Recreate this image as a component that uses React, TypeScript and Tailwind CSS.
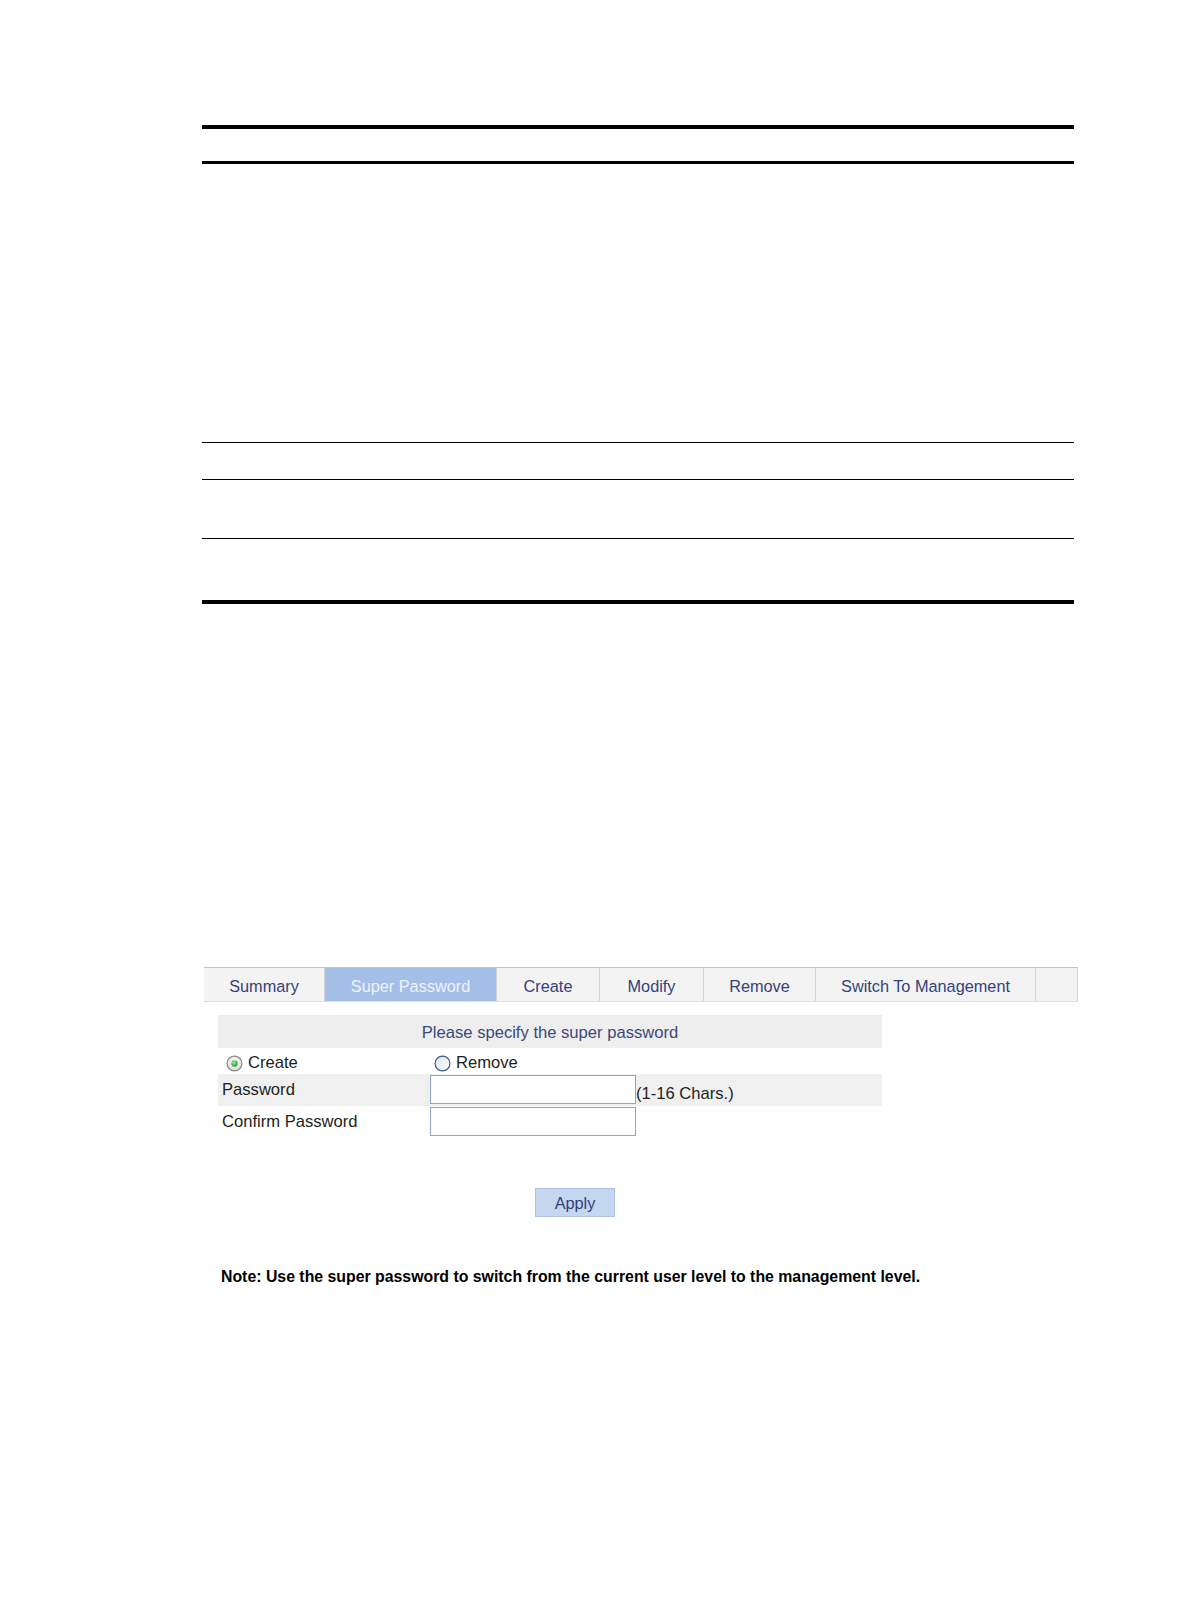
import React from "react";

function RadioOn() {
  return (
    <svg width="17" height="17" viewBox="0 0 16 16" className="shrink-0">
      <defs>
        <radialGradient id="rg1" cx="50%" cy="40%" r="60%">
          <stop offset="0%" stopColor="#ffffff" />
          <stop offset="100%" stopColor="#dcdcdc" />
        </radialGradient>
        <radialGradient id="rg2" cx="40%" cy="35%" r="70%">
          <stop offset="0%" stopColor="#9be89b" />
          <stop offset="100%" stopColor="#1f9a2a" />
        </radialGradient>
      </defs>
      <circle cx="8" cy="8" r="7" fill="url(#rg1)" stroke="#8a8a8a" strokeWidth="1.1" />
      <circle cx="8" cy="8" r="3" fill="url(#rg2)" />
    </svg>
  );
}

function RadioOff() {
  return (
    <svg width="17" height="17" viewBox="0 0 16 16" className="shrink-0">
      <defs>
        <linearGradient id="lg1" x1="0" y1="0" x2="1" y2="1">
          <stop offset="0%" stopColor="#dfe3ea" />
          <stop offset="100%" stopColor="#ffffff" />
        </linearGradient>
      </defs>
      <circle cx="8" cy="8" r="7" fill="url(#lg1)" stroke="#3f5d8c" strokeWidth="1.1" />
    </svg>
  );
}

const tabs = [
  { label: "Summary", w: "w-[121px]", active: false },
  { label: "Super Password", w: "w-[172px]", active: true },
  { label: "Create", w: "w-[103px]", active: false },
  { label: "Modify", w: "w-[104px]", active: false },
  { label: "Remove", w: "w-[112px]", active: false },
  { label: "Switch To Management", w: "w-[220px]", active: false },
  { label: "", w: "w-[42px]", active: false },
];

export default function App() {
  return (
    <div className="relative w-[1190px] h-[1616px] bg-white font-['Liberation_Sans',Arial,sans-serif] overflow-hidden">
      {/* Top table lines */}
      <div className="pt-[125px] ml-[202px] w-[872px]">
        <div className="h-[4px] bg-black" />
        <div className="h-[32px]" />
        <div className="h-[3px] bg-black" />
        <div className="h-[278px]" />
        <div className="h-[1px] bg-black" />
        <div className="h-[36px]" />
        <div className="h-[1px] bg-black" />
        <div className="h-[58px]" />
        <div className="h-[1px] bg-black" />
        <div className="h-[61px]" />
        <div className="h-[4px] bg-black" />
      </div>

      {/* Tab bar */}
      <div className="mt-[363px] ml-[204px] flex h-[35px] border-t border-b border-t-[#c4c4c4] border-b-[#dedede] w-[874px]">
        {tabs.map((t, i) => (
          <div
            key={i}
            className={`${t.w} h-full flex items-center justify-center pt-[3px] text-[16.3px] border-r border-[#d2d2d2] ${
              t.active ? "bg-[#a4bfe7] text-[#eef3fb]" : "bg-[#f3f3f3] text-[#34427a]"
            }`}
          >
            {t.label}
          </div>
        ))}
      </div>

      {/* Form */}
      <div className="mt-[13px] ml-[218px] w-[664px] text-[16.6px]">
        <div className="h-[33px] bg-[#eeeeee] flex items-center justify-center pt-[3px] text-[#3b4879]">
          Please specify the super password
        </div>
        <div className="h-[26px] flex items-center pt-[5px] text-[#1e1e1e]">
          <div className="w-[212px] pl-[8px] flex items-center gap-[5px]">
            <RadioOn />
            <span>Create</span>
          </div>
          <div className="pl-[4px] flex items-center gap-[5px]">
            <RadioOff />
            <span>Remove</span>
          </div>
        </div>
        <div className="h-[32px] bg-[#f0f0f0] flex text-[#1e1e1e]">
          <div className="w-[212px] pl-[4px] flex items-center">Password</div>
          <div className="mt-[1px] w-[206px] h-[29px] bg-white border border-[#8ea5c9]" />
          <div className="flex items-end translate-y-[1px]">(1-16 Chars.)</div>
        </div>
        <div className="h-[32px] flex text-[#1e1e1e]">
          <div className="w-[212px] pl-[4px] flex items-center">Confirm Password</div>
          <div className="mt-[1px] w-[206px] h-[29px] bg-white border border-[#8ea5c9]" />
        </div>

        <div className="mt-[50px] ml-[317px] w-[80px] h-[29px] bg-[#c5d6f0] border border-[#adc2e4] flex items-center justify-center pt-[2px] text-[16.3px] text-[#2f3f7a]">
          Apply
        </div>

        <div className="mt-[51px] ml-[3px] text-[15.85px] font-bold text-black leading-[18px] whitespace-nowrap">
          Note: Use the super password to switch from the current user level to the management level.
        </div>
      </div>
    </div>
  );
}
